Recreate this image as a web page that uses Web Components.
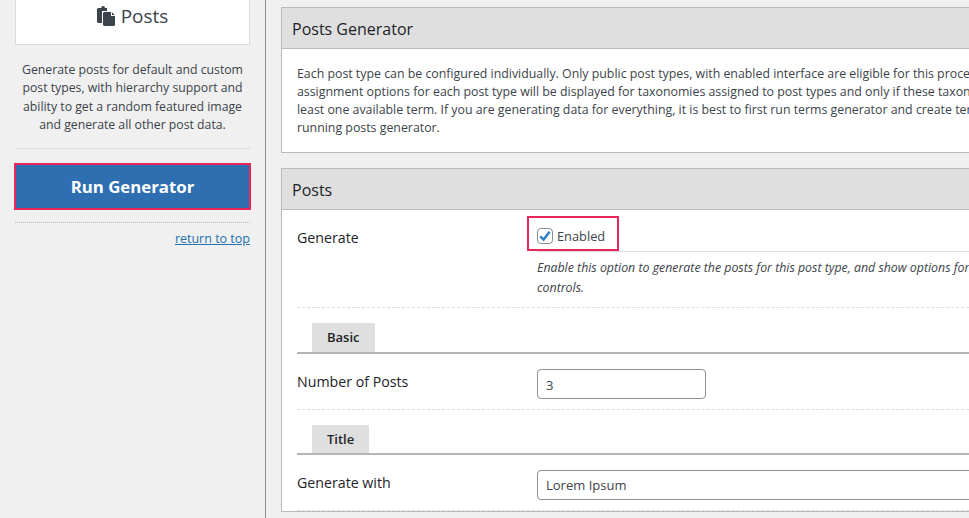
<!DOCTYPE html>
<html>
<head>
<meta charset="utf-8">
<title>Posts Generator</title>
<style>
  html, body { margin: 0; height: 518px; overflow: hidden; background: #f0f0f0; }
  body { font-family: "Open Sans", "Noto Sans", sans-serif; font-size: 12.35px; color: #3c434a; }
</style>
</head>
<body>

<gen-page>
  <gen-sidebar slot="side" title-text="Posts" link="return to top" action="Run Generator">
    Generate posts for default and custom post types, with hierarchy support and ability to get a random featured image and generate all other post data.
  </gen-sidebar>

  <gen-panel heading="Posts Generator">
    <gen-intro>
      <span>Each post type can be configured individually. Only public post types, with enabled interface are eligible for this process.</span>
      <span>assignment options for each post type will be displayed for taxonomies assigned to post types and only if these taxonomies have at</span>
      <span>least one available term. If you are generating data for everything, it is best to first run terms generator and create terms before</span>
      <span>running posts generator.</span>
    </gen-intro>
  </gen-panel>

  <gen-panel heading="Posts">
    <gen-generate-row></gen-generate-row>
    <gen-tab>Basic</gen-tab>
    <gen-field label="Number of Posts" value="3" width="169px"></gen-field>
    <gen-tab style="--tab-height: 28px">Title</gen-tab>
    <gen-field label="Generate with" value="Lorem Ipsum" width="500px" style="--value-line: 29px"></gen-field>
  </gen-panel>
</gen-page>

<script>
// page shell, sidebar on the left and the panels in the main column
class GenPage extends HTMLElement {
  constructor() {
    super();
    this.attachShadow({ mode: "open" });
    this.shadowRoot.innerHTML = `
      <style>
        :host { display: grid; grid-template-columns: 266px 1fr; width: 1200px; height: 518px; }
        .main { display: flex; flex-direction: column; gap: 15px; padding: 7px 0 0 15px; width: 904px; }
      </style>
      <slot name="side"></slot>
      <div class="main"><slot></slot></div>
    `;
  }
}

class GenSidebar extends HTMLElement {
  constructor() {
    super();
    this.attachShadow({ mode: "open" });
    this.shadowRoot.innerHTML = `
      <style>
        :host { display: block; box-sizing: border-box; height: 518px; padding: 0 15px; border-right: 1px solid #8c8f94; font-size: 12.25px; }
        .card {
          height: 45px; box-sizing: border-box; background: #fff;
          border: 1px solid #dcdcdc; border-top: 0; padding-bottom: 12px;
          display: flex; align-items: center; justify-content: center; gap: 6px;
          font-size: 19px; color: #3c434a; line-height: 24px;
        }
        svg { display: block; }
        p { margin: 16px 0 0; text-align: center; line-height: 18.3px; padding-bottom: 13.8px; border-bottom: 1px solid #dcdcdc; }
        button {
          display: block; box-sizing: border-box; width: 237px; height: 47px; margin: 14px 0 0 -1px; padding: 2px 0 0;
          background: #2e6fb2; border: 2px solid #e8265a; color: #fff;
          font: 700 16.800px/1 "Open Sans", sans-serif;
        }
        .foot { margin-top: 12px; border-top: 1px dotted #bbb; padding-top: 7px; text-align: right; line-height: 18px; }
        a { color: #2271b1; text-decoration: underline; font-size: 12.500px; }
      </style>
      <div class="card">
        <svg width="18" height="20" viewBox="0 0 18 20" fill="#3c434a">
          <path d="M2 2h2.2A1.9 1.9 0 0 1 8 2h2v3H5v12H1.5A1.5 1.5 0 0 1 0 15.500V3.500A1.500 1.500 0 0 1 2 2z"/>
          <path d="M8 6h6v4h4v8.500a1.500 1.500 0 0 1-1.500 1.500h-9A1.500 1.500 0 0 1 6 18.500V7.500A1.500 1.500 0 0 1 8 6z"/>
          <path d="M15 6.200 17.800 9H15z"/>
        </svg>
        <span>${this.getAttribute("title-text")}</span>
      </div>
      <p><slot></slot></p>
      <button>${this.getAttribute("action")}</button>
      <div class="foot"><a href="#">${this.getAttribute("link")}</a></div>
    `;
  }
}

class GenPanel extends HTMLElement {
  constructor() {
    super();
    this.attachShadow({ mode: "open" });
    this.shadowRoot.innerHTML = `
      <style>
        :host { display: block; background: #fff; border: 1px solid #bbb; }
        h2 {
          margin: 0; height: 41px; box-sizing: border-box; padding: 1px 10px 0; background: #dfdfdf;
          border-bottom: 1px solid #bbb; font: 500 16px/40px "Open Sans", sans-serif; color: #1d2327;
        }
      </style>
      <h2>${this.getAttribute("heading")}</h2>
      <slot></slot>
    `;
  }
}

class GenIntro extends HTMLElement {
  constructor() {
    super();
    this.attachShadow({ mode: "open" });
    this.shadowRoot.innerHTML = `
      <style>
        :host { display: block; padding: 16px 15px 14.800px; line-height: 18px; white-space: nowrap; }
        ::slotted(span) { display: block; }
      </style>
      <slot></slot>
    `;
  }
}

class GenGenerateRow extends HTMLElement {
  constructor() {
    super();
    this.attachShadow({ mode: "open" });
    this.shadowRoot.innerHTML = `
      <style>
        :host { display: grid; grid-template-columns: 240px 1fr; margin: 0 0 0 15px; padding: 6px 0 9px; border-bottom: 1px dashed #ddd; }
        .label { font-size: 14.200px; font-weight: 500; color: #1d2327; padding-top: 13px; line-height: 18px; }
        .mark {
          display: inline-flex; align-items: center; gap: 4px; box-sizing: border-box; font-size: 12.800px;
          height: 35px; width: 92px; margin-left: -10px; padding: 6px 0 0 8px; border: 2px solid #e8265a;
        }
        .box { width: 16px; height: 16px; box-sizing: border-box; border: 1px solid #8c8f94; border-radius: 4px; background: #fff; display: block; }
        .box svg { display: block; margin: -1px; }
        .ruled { border-top: 1px solid #ddd; margin-top: 0; padding-top: 6px; font-style: italic; line-height: 20px; white-space: nowrap; }
        .stack { min-width: 0; }
      </style>
      <div class="label">Generate</div>
      <div class="stack">
        <div class="mark"><span class="box"><svg width="16" height="16" viewBox="0 0 16 16"><path d="M3.300 8.400 6.600 11.600 12.600 3.800" fill="none" stroke="#3582c4" stroke-width="2.600"/></svg></span><span>Enabled</span></div>
        <div class="ruled">Enable this option to generate the posts for this post type, and show options for it and other<br>controls.</div>
      </div>
    `;
  }
}

class GenTab extends HTMLElement {
  constructor() {
    super();
    this.attachShadow({ mode: "open" });
    this.shadowRoot.innerHTML = `
      <style>
        :host { display: block; margin: 15px 0 0 15px; padding-left: 15px; border-bottom: 2px solid #b4b4b4; }
        span { display: inline-block; vertical-align: bottom; padding: 0 15px; height: var(--tab-height, 29px); line-height: var(--tab-height, 29px); background: #dfdfdf; font-weight: 600; font-size: 13px; color: #1d2327; }
      </style>
      <span><slot></slot></span>
    `;
  }
}

class GenField extends HTMLElement {
  constructor() {
    super();
    this.attachShadow({ mode: "open" });
    this.shadowRoot.innerHTML = `
      <style>
        :host { display: grid; grid-template-columns: 240px 1fr; margin-left: 15px; padding: 15px 0 10px; border-bottom: 1px dashed #ddd; }
        .label { font-size: 14.200px; font-weight: 500; color: #1d2327; line-height: 18px; padding-top: 4px; }
        .input {
          box-sizing: border-box; width: ${this.getAttribute("width")}; height: 30px; padding: 0 8px; line-height: var(--value-line, 30px); font-size: 13px;
          border: 1px solid #8c8f94; border-radius: 4px; background: #fff; color: #3c434a;
        }
      </style>
      <div class="label">${this.getAttribute("label")}</div>
      <div class="input">${this.getAttribute("value")}</div>
    `;
  }
}

window.customElements.define("gen-page", GenPage);
window.customElements.define("gen-sidebar", GenSidebar);
window.customElements.define("gen-panel", GenPanel);
window.customElements.define("gen-intro", GenIntro);
window.customElements.define("gen-generate-row", GenGenerateRow);
window.customElements.define("gen-tab", GenTab);
window.customElements.define("gen-field", GenField);
</script>
</body>
</html>
